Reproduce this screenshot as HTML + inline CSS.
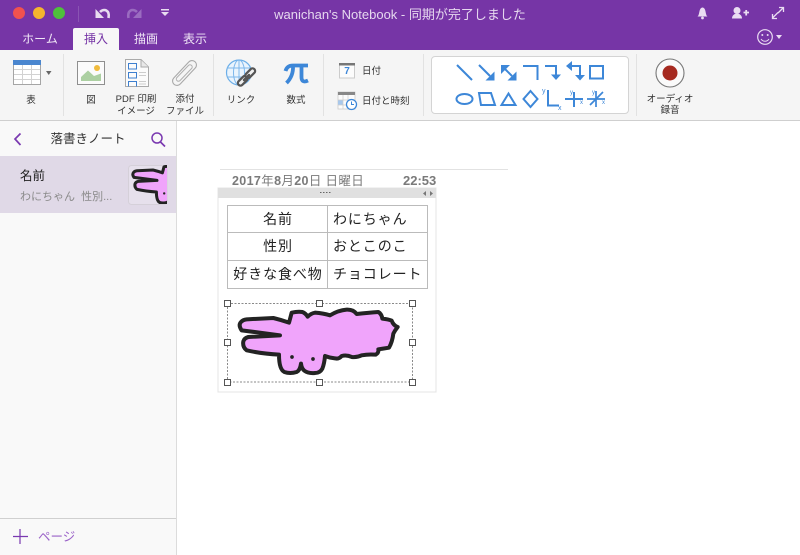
<!DOCTYPE html>
<html><head><meta charset="utf-8">
<style>
html,body{margin:0;padding:0;width:800px;height:555px;overflow:hidden;background:#fff;font-family:"Liberation Sans","Noto Sans CJK JP",sans-serif}
.a{position:absolute;white-space:nowrap}
.c{transform:translateX(-50%);text-align:center}
.t{font-size:12px;line-height:14px;color:#f0e6f6;top:32px}
.r{font-size:9.5px;line-height:12px;color:#333}
.cell{font-size:14px;letter-spacing:.9px;color:#222;line-height:20px}
</style></head>
<body>
<div class="a" style="left:0;top:0;width:800px;height:50px;background:#7635a6"></div>
<div class="a" style="left:73px;top:28px;width:46px;height:22px;background:#f7f7f7;border-radius:2px 2px 0 0"></div>
<div class="a" style="left:0;top:50px;width:800px;height:70px;background:#f5f5f5"></div>
<div class="a" style="left:0;top:120px;width:800px;height:1px;background:#cfcfcf"></div>
<div class="a" style="left:0;top:121px;width:176px;height:434px;background:#f9f9f9"></div>
<div class="a" style="left:176px;top:121px;width:1px;height:434px;background:#dcdcdc"></div>
<div class="a" style="left:0;top:156px;width:176px;height:57px;background:#e0d9e7"></div>
<div class="a" style="left:0;top:518px;width:176px;height:1px;background:#d0d0d0"></div>

<div class="a" style="left:431px;top:56px;background:#fff;border:1px solid #d4d4d4;border-radius:4px;box-sizing:border-box;width:198px;height:58px"></div>

<svg class="a" style="left:0;top:0" width="800" height="555" viewBox="0 0 800 555">
<defs><clipPath id="th"><rect x="130" y="165" width="37" height="39"/></clipPath></defs>
<!-- traffic -->
<circle cx="19" cy="13" r="6" fill="#f0524f"/><circle cx="39" cy="13" r="6" fill="#f5b52e"/><circle cx="59" cy="13" r="6" fill="#4fc13c"/>
<rect x="78" y="6" width="1" height="16" fill="#8a54b3"/>
<path d="M100 12C104 8 110 10 108.500 18" fill="none" stroke="#e8dcf0" stroke-width="2.600"/><path d="M95.500 9L95.500 18L104 18Z" fill="#e8dcf0"/>
<path d="M137 12C133 8 127 10 128.500 18" fill="none" stroke="#9a6cc0" stroke-width="2.600"/><path d="M141.500 9L141.500 18L133 18Z" fill="#9a6cc0"/>
<rect x="161" y="9" width="8" height="1.500" fill="#e8dcf0"/><path d="M161 12h8l-4 4z" fill="#e8dcf0"/>
<!-- right title -->
<path d="M697.500 16.500C700 15 698.500 8 702.500 7.500C706.500 8 705 15 707.500 16.500Z" fill="#eadcf2"/><circle cx="702.500" cy="18" r="1.400" fill="#eadcf2"/>
<circle cx="737" cy="10.500" r="3.500" fill="#eadcf2"/><path d="M732 18.500c0-6.500 10-6.500 10 0z" fill="#eadcf2"/><path d="M743.500 12.500h5.500M746.200 10v5.500" stroke="#eadcf2" stroke-width="1.800"/>
<path d="M772.500 18L778 12.500M772.500 14v4.500h4.500M783 8L778 13M779 7.500h4.500V12" stroke="#eadcf2" stroke-width="1.300" fill="none"/>
<circle cx="765" cy="37" r="7.300" fill="none" stroke="#eadcf2" stroke-width="1.200"/><circle cx="762.300" cy="35" r="1" fill="#eadcf2"/><circle cx="767.700" cy="35" r="1" fill="#eadcf2"/><path d="M761 39c2 3 6 3 8 0" stroke="#eadcf2" fill="none"/>
<path d="M776 35h6l-3 4z" fill="#eadcf2"/>
<!-- dividers -->
<g fill="#e2e2e2"><rect x="63" y="54" width="1" height="62"/><rect x="213" y="54" width="1" height="62"/><rect x="323" y="54" width="1" height="62"/><rect x="423" y="54" width="1" height="62"/><rect x="636" y="54" width="1" height="62"/></g>
<!-- table icon -->
<rect x="13.500" y="60.500" width="27" height="24" fill="#fff" stroke="#a5a5a5"/>
<rect x="13" y="60" width="28" height="5" fill="#4a86cf"/>
<path d="M14 69.500h26M14 74.500h26M14 79.500h26M22.500 65v19M31.500 65v19" stroke="#d2d2d2" fill="none"/>
<path d="M46 71h5.500l-2.750 4z" fill="#666"/>
<!-- picture icon -->
<rect x="77.500" y="61.500" width="27" height="23" fill="#fbfbfb" stroke="#8f8f8f"/>
<path d="M81 81L81 77L88 70.500L94 76L101 73.500V81Z" fill="#acd0a2"/><circle cx="97" cy="68" r="3" fill="#f0bb3c"/>
<!-- PDF doc -->
<path d="M125.500 59.500H141L148.500 67V86.500H125.500Z" fill="#fbfbfb" stroke="#aaa"/><path d="M141 60v7h7.500" fill="#e8e8e8" stroke="#aaa"/>
<g fill="none" stroke="#3d7fcf"><rect x="128.500" y="63.500" width="8" height="5.500"/><rect x="128.500" y="72.500" width="8" height="5.500"/><path d="M128.500 86.500v-5h8v5"/></g>
<path d="M139 72.500h7M139 75.500h7M139 81.500h7M139 84h7" stroke="#ccc" fill="none"/>
<!-- clip -->
<g stroke-linecap="round" fill="none"><path d="M177 81L192 65" stroke="#a9a9a9" stroke-width="10"/><path d="M177 81L192 65" stroke="#f5f5f5" stroke-width="7.800"/><path d="M178.500 79L190 67" stroke="#b0b0b0" stroke-width="5.400"/><path d="M178.500 79L190 67" stroke="#f5f5f5" stroke-width="3.400"/></g>
<!-- globe -->
<circle cx="239" cy="72.500" r="12.500" fill="#eaf4fd" stroke="#6baee8" stroke-width="1.200"/>
<ellipse cx="239" cy="72.500" rx="5.500" ry="12.500" fill="none" stroke="#7db7ec"/><path d="M227 68h24M227 77h24M239 60v25" stroke="#7db7ec" fill="none"/>
<g stroke-linecap="round" fill="none"><path d="M240.500 83L245 78.500" stroke="#555" stroke-width="7.500"/><path d="M240.500 83L245 78.500" stroke="#f0f0f0" stroke-width="3"/><path d="M248 75.500L252.500 71" stroke="#555" stroke-width="7.500"/><path d="M248 75.500L252.500 71" stroke="#f0f0f0" stroke-width="3"/><path d="M244 80L249 75" stroke="#555" stroke-width="2.400"/></g>
<!-- pi icon -->
<path d="M285.500 71Q287 65.500 293 65.500H308M293 66Q293.500 76 286.500 83M301.500 66V77Q301.500 83.500 308 80.500" fill="none" stroke="#3d87d8" stroke-width="3.800"/>
<!-- calendars -->
<rect x="339.500" y="64" width="15" height="14" fill="#fcfcfc" stroke="#ccc"/><rect x="339" y="63" width="16" height="2.500" fill="#777"/>
<rect x="338" y="92" width="17" height="17" fill="#fcfcfc" stroke="#ccc" stroke-width=".8"/><rect x="338" y="92" width="17" height="3" fill="#888"/>
<rect x="338" y="100" width="5" height="5" fill="#a8c8ec"/><path d="M338 100h14M338 105h8M343 95v14M348 95v14" stroke="#ccc" stroke-width=".7" fill="none"/>
<circle cx="351.500" cy="104.500" r="5" fill="#fff" stroke="#3d87d8" stroke-width="1.300"/><path d="M351.500 101.500v3h2.500" stroke="#3d87d8" fill="none"/>
<!-- shapes row1 -->
<g fill="none" stroke="#3d87d8" stroke-width="2">
<path d="M457 65L472 80"/>
<path d="M479 65L490 76"/><path d="M494.500 80.500V71.500L485.500 80.500Z" fill="#3d87d8" stroke="none"/>
<path d="M505 69L512 76"/><path d="M501 65V74L510 65Z" fill="#3d87d8" stroke="none"/><path d="M516.500 80.500V71.500L507.500 80.500Z" fill="#3d87d8" stroke="none"/>
<path d="M523 66H537.500V80"/>
<path d="M545 66H556V76"/><path d="M551 74.500h10l-5 5.500z" fill="#3d87d8" stroke="none"/>
<path d="M570 66H580V76"/><path d="M572 61v10l-6-5z" fill="#3d87d8" stroke="none"/><path d="M575 75h10l-5 5.500z" fill="#3d87d8" stroke="none"/>
<rect x="590" y="66" width="13" height="12.500"/>
<ellipse cx="464.500" cy="99" rx="8" ry="5"/>
<path d="M479 93H491L495 105H481Z"/>
<path d="M508.500 93.500L515.500 105H501.500Z"/>
<path d="M530.500 91L537.500 99L530.500 107L523.500 99Z"/>
<path d="M548 90V105.500H559"/>
<path d="M565 99H583M574 92V107"/>
<path d="M587 99H605M596 91V107M590 105L603 92" stroke-width="1.700"/>
</g>
<g fill="#3d87d8" font-size="7" font-family="Liberation Sans,sans-serif">
<text x="542" y="93">y</text><text x="558" y="110">x</text><text x="570" y="94" font-size="6">y</text><text x="580" y="104" font-size="6">x</text><text x="592" y="94" font-size="6">y</text><text x="602" y="104" font-size="6">x</text>
</g>
<!-- record -->
<circle cx="670" cy="73" r="14" fill="#fafafa" stroke="#777" stroke-width="1.100"/><circle cx="670" cy="73" r="7.500" fill="#a62a20"/>
<!-- sidebar icons -->
<path d="M20.500 133.500L15 139L20.500 145" fill="none" stroke="#7a39b0" stroke-width="1.700"/>
<circle cx="157" cy="138" r="5" fill="none" stroke="#7a39b0" stroke-width="1.500"/><path d="M160.500 142L165 146.500" stroke="#7a39b0" stroke-width="1.700"/>
<path d="M20 529V544M13 536.500H28" stroke="#7a39b0" stroke-width="1.200"/>
<!-- thumbnail -->
<rect x="128.500" y="165.500" width="38.500" height="39" rx="3" fill="#e6e0ec" stroke="#d5d0d9"/>
<g clip-path="url(#th)"><g transform="translate(118 154.400) scale(.2)"><path d="M78 112Q70 98 78 90Q84 83 95 82L175 78Q200 84 222 92Q226 78 230 62Q248 58 262 60Q272 64 278 74Q288 64 300 62Q325 64 345 70Q370 55 395 53Q415 52 425 66Q460 62 490 60Q500 66 502 80Q520 82 530 86Q535 100 548 105Q540 115 535 125Q532 150 522 167Q503 170 490 172Q492 182 482 188Q460 186 440 190Q425 197 410 195Q395 188 380 192Q372 202 360 199Q345 198 330 192Q328 215 322 230Q315 243 300 243Q280 245 268 236Q260 230 258 215Q255 235 245 240Q225 246 208 240Q192 232 192 188Q140 185 95 175Q82 165 85 148Q88 138 100 135L195 130L80 115Z" fill="#f0a4fb" stroke="#232323" stroke-width="15" stroke-linejoin="round"/><circle cx="231" cy="195" r="6" fill="#232323"/></g></g>
<!-- page -->
<path d="M220 169.500H508" stroke="#e2e2e2"/>
<rect x="218" y="188" width="218" height="204" fill="#fff" stroke="#e4e4e4"/>
<rect x="218" y="188" width="218" height="10" fill="#e0e0e0"/>
<path d="M320 192.500h1.500M323 192.500h1.500M326 192.500h1.500M329 192.500h1.500" stroke="#666"/>
<path d="M426 191l-3 2.500 3 2.500zM430 191l3 2.500-3 2.500z" fill="#777"/>
<!-- table -->
<rect x="227.500" y="205.500" width="200" height="83" fill="#fff" stroke="#bbb"/>
<path d="M227.500 232.500H427.500M227.500 260.500H427.500M327.500 205.500V288.500" stroke="#bbb"/>
<!-- selection + drawing -->
<g transform="translate(215 292) scale(.33333)"><path d="M78 112Q70 98 78 90Q84 83 95 82L175 78Q200 84 222 92Q226 78 230 62Q248 58 262 60Q272 64 278 74Q288 64 300 62Q325 64 345 70Q370 55 395 53Q415 52 425 66Q460 62 490 60Q500 66 502 80Q520 82 530 86Q535 100 548 105Q540 115 535 125Q532 150 522 167Q503 170 490 172Q492 182 482 188Q460 186 440 190Q425 197 410 195Q395 188 380 192Q372 202 360 199Q345 198 330 192Q328 215 322 230Q315 243 300 243Q280 245 268 236Q260 230 258 215Q255 235 245 240Q225 246 208 240Q192 232 192 188Q140 185 95 175Q82 165 85 148Q88 138 100 135L195 130L80 115Z" fill="#f0a4fb" stroke="#232323" stroke-width="12" stroke-linejoin="round"/><circle cx="231" cy="195" r="5.500" fill="#232323"/><circle cx="294" cy="201" r="5.500" fill="#232323"/></g>
<rect x="227.500" y="303.500" width="185" height="78.500" fill="none" stroke="#8a8a8a" stroke-dasharray="2 1.500"/>
<g fill="#fff" stroke="#555"><rect x="224.500" y="300.500" width="6" height="6"/><rect x="316.500" y="300.500" width="6" height="6"/><rect x="409.500" y="300.500" width="6" height="6"/><rect x="224.500" y="339.500" width="6" height="6"/><rect x="409.500" y="339.500" width="6" height="6"/><rect x="224.500" y="379.500" width="6" height="6"/><rect x="316.500" y="379.500" width="6" height="6"/><rect x="409.500" y="379.500" width="6" height="6"/></g>
</svg>

<!-- title -->
<div class="a c" style="left:400px;top:7px;font-size:13px;line-height:16px;color:#e6d8ef">wanichan's Notebook - 同期が完了しました</div>
<div class="a c t" style="left:40px">ホーム</div>
<div class="a c t" style="left:96px;color:#7635a6">挿入</div>
<div class="a c t" style="left:146px">描画</div>
<div class="a c t" style="left:195px">表示</div>
<!-- ribbon labels -->
<div class="a c r" style="left:31px;top:95px">表</div>
<div class="a c r" style="left:91px;top:95px">図</div>
<div class="a c r" style="left:136px;top:93.500px;line-height:12px">PDF 印刷<br>イメージ</div>
<div class="a c r" style="left:185px;top:93.500px;line-height:12px">添付<br>ファイル</div>
<div class="a c r" style="left:241px;top:95px">リンク</div>
<div class="a c r" style="left:296px;top:95px">数式</div>
<div class="a r" style="left:362px;top:66px">日付</div>
<div class="a r" style="left:362px;top:96px">日付と時刻</div>
<div class="a c r" style="left:670px;top:93.500px;line-height:11px">オーディオ<br>録音</div>
<div class="a c" style="left:347px;top:65px;font-size:10px;line-height:14px;font-weight:bold;color:#3d87d8">7</div>
<!-- sidebar text -->
<div class="a c" style="left:88px;top:131px;font-size:12.500px;line-height:16px;color:#333">落書きノート</div>
<div class="a" style="left:20px;top:167px;font-size:12.500px;line-height:18px;color:#222">名前</div>
<div class="a" style="left:20px;top:189px;font-size:11px;line-height:16px;color:#8a8a8a">わにちゃん&nbsp; 性別...</div>
<div class="a" style="left:38px;top:529px;font-size:12.500px;line-height:16px;color:#9a62c8">ページ</div>
<!-- note -->
<div class="a" style="left:232px;top:173px;font-size:12.500px;line-height:16px;color:#7a7a7a;letter-spacing:.35px"><b>2017</b>年<b>8</b>月<b>20</b>日 日曜日</div>
<div class="a" style="left:403px;top:173px;font-size:13px;line-height:16px;font-weight:bold;color:#7a7a7a">22:53</div>
<div class="a c cell" style="left:278px;top:209px">名前</div>
<div class="a c cell" style="left:278px;top:236px">性別</div>
<div class="a c cell" style="left:278px;top:264px">好きな食べ物</div>
<div class="a cell" style="left:333px;top:209px">わにちゃん</div>
<div class="a cell" style="left:333px;top:236px">おとこのこ</div>
<div class="a cell" style="left:333px;top:264px">チョコレート</div>
</body></html>
